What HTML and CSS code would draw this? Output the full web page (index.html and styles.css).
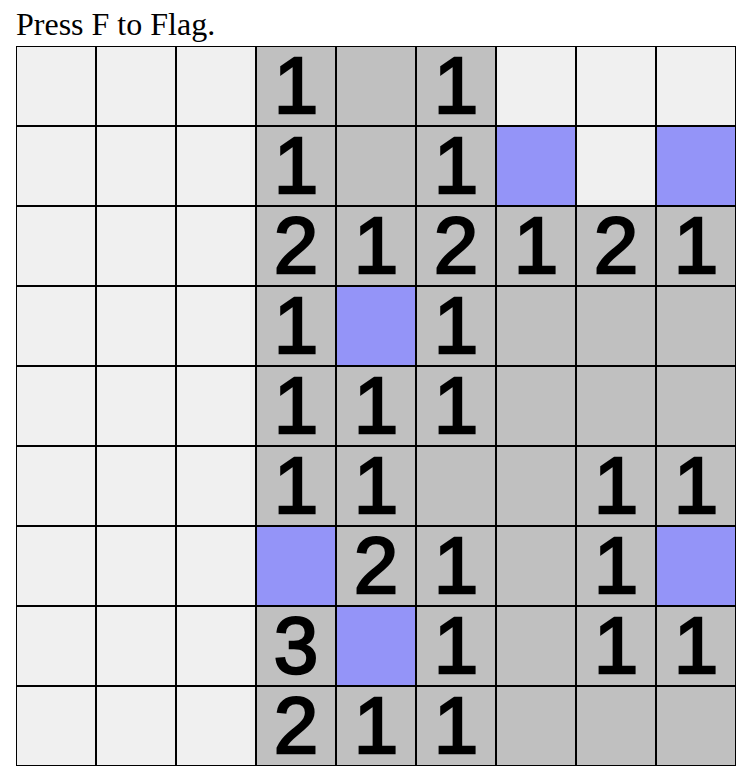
FILE: index.html
```html
<!DOCTYPE html>
<html>
<head>
<meta charset="utf-8">
<link rel="stylesheet" href="styles.css">
</head>
<body>
<div class="hint">Press F to Flag.</div>
<div class="board">
  <div class="cell hidden"></div><div class="cell hidden"></div><div class="cell hidden"></div><div class="cell open">1</div><div class="cell open"></div><div class="cell open">1</div><div class="cell hidden"></div><div class="cell hidden"></div><div class="cell hidden"></div>
  <div class="cell hidden"></div><div class="cell hidden"></div><div class="cell hidden"></div><div class="cell open">1</div><div class="cell open"></div><div class="cell open">1</div><div class="cell flag"></div><div class="cell hidden"></div><div class="cell flag"></div>
  <div class="cell hidden"></div><div class="cell hidden"></div><div class="cell hidden"></div><div class="cell open">2</div><div class="cell open">1</div><div class="cell open">2</div><div class="cell open">1</div><div class="cell open">2</div><div class="cell open">1</div>
  <div class="cell hidden"></div><div class="cell hidden"></div><div class="cell hidden"></div><div class="cell open">1</div><div class="cell flag"></div><div class="cell open">1</div><div class="cell open"></div><div class="cell open"></div><div class="cell open"></div>
  <div class="cell hidden"></div><div class="cell hidden"></div><div class="cell hidden"></div><div class="cell open">1</div><div class="cell open">1</div><div class="cell open">1</div><div class="cell open"></div><div class="cell open"></div><div class="cell open"></div>
  <div class="cell hidden"></div><div class="cell hidden"></div><div class="cell hidden"></div><div class="cell open">1</div><div class="cell open">1</div><div class="cell open"></div><div class="cell open"></div><div class="cell open">1</div><div class="cell open">1</div>
  <div class="cell hidden"></div><div class="cell hidden"></div><div class="cell hidden"></div><div class="cell flag"></div><div class="cell open">2</div><div class="cell open">1</div><div class="cell open"></div><div class="cell open">1</div><div class="cell flag"></div>
  <div class="cell hidden"></div><div class="cell hidden"></div><div class="cell hidden"></div><div class="cell open">3</div><div class="cell flag"></div><div class="cell open">1</div><div class="cell open"></div><div class="cell open">1</div><div class="cell open">1</div>
  <div class="cell hidden"></div><div class="cell hidden"></div><div class="cell hidden"></div><div class="cell open">2</div><div class="cell open">1</div><div class="cell open">1</div><div class="cell open"></div><div class="cell open"></div><div class="cell open"></div>
</div>
</body>
</html>
```
FILE: styles.css
```css
html, body {
  margin: 0;
  padding: 0;
  background: #ffffff;
}
body {
  padding: 6px 16px 0 16px;
}
.hint {
  font-family: "Liberation Serif", "Times New Roman", serif;
  font-size: 32px;
  line-height: 36px;
  color: #000;
  margin-bottom: 4px;
}
.board {
  display: grid;
  grid-template-columns: repeat(9, 80px);
  grid-auto-rows: 80px;
  width: 720px;
}
.cell {
  box-sizing: border-box;
  border: 1px solid #000;
  font-family: "Liberation Sans", Arial, Helvetica, sans-serif;
  font-size: 80px;
  line-height: 78px;
  text-align: center;
  color: #000;
  -webkit-text-stroke: 2.5px #000;
  overflow: hidden;
}
.hidden { background: #f0f0f0; }
.open { background: #c0c0c0; }
.flag { background: #9494f8; }
```
